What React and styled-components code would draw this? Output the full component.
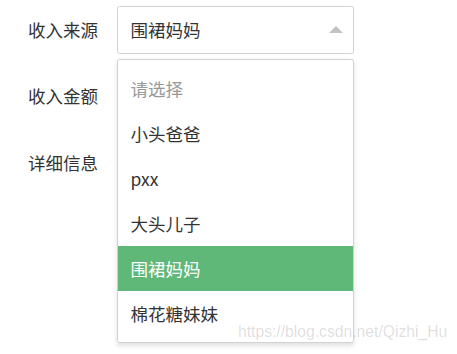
import React from "react";
import styled, { createGlobalStyle } from "styled-components";

const GlobalStyle = createGlobalStyle`
  html, body {
    margin: 0;
    padding: 0;
    background: #fff;
  }
  body {
    font-family: "Noto Sans CJK SC", "Noto Sans", sans-serif;
  }
`;

const Page = styled.div`
  position: relative;
  width: 457px;
  height: 354px;
  overflow: hidden;
  padding-top: 6px;
  box-sizing: border-box;
`;

const FormItem = styled.div`
  display: flex;
  align-items: flex-start;
  margin-bottom: 18.75px;
`;

const Label = styled.label`
  width: 89px;
  padding-left: 28px;
  height: 47.5px;
  line-height: 47.5px;
  font-size: 17.5px;
  color: #333;
`;

const SelectWrap = styled.div`
  position: relative;
  width: 237px;
`;

const Input = styled.div`
  box-sizing: border-box;
  height: ${(p) => p.h || 47.5}px;
  border: 1px solid ${(p) => (p.active ? "#d2d2d2" : "#e6e6e6")};
  border-radius: 2.5px;
  padding-left: 12.5px;
  line-height: 45.5px;
  font-size: 17.5px;
  color: #333;
  background: #fff;
`;

const Edge = styled.span`
  position: absolute;
  right: 11px;
  top: 20px;
  width: 0;
  height: 0;
  border-left: 7.5px solid transparent;
  border-right: 7.5px solid transparent;
  border-bottom: 7.5px solid #c2c2c2;
`;

const Menu = styled.dl`
  position: absolute;
  z-index: 10;
  left: 0;
  top: 52.5px;
  width: 100%;
  box-sizing: border-box;
  margin: 0;
  padding: 6.25px 0;
  background: #fff;
  border: 1px solid #d2d2d2;
  border-radius: 2.5px;
  box-shadow: 0 2.5px 5px rgba(0, 0, 0, 0.12);
`;

const Option = styled.dd`
  margin: 0;
  padding: 0 12.5px;
  line-height: 45px;
  height: 45px;
  font-size: 17.5px;
  white-space: nowrap;
  color: ${(p) => (p.selected ? "#fff" : p.tip ? "#999" : "#333")};
  background: ${(p) => (p.selected ? "#5fb878" : "transparent")};
`;

const Watermark = styled.div`
  position: absolute;
  z-index: 20;
  left: 238px;
  top: 323px;
  font-family: "Liberation Sans", Arial, sans-serif;
  font-size: 15.7px;
  line-height: 18px;
  color: rgba(0, 0, 0, 0.14);
  white-space: nowrap;
`;

const options = ["小头爸爸", "pxx", "大头儿子", "围裙妈妈", "棉花糖妹妹"];

export default function App() {
  const current = "围裙妈妈";
  return (
    <>
      <GlobalStyle />
      <Page>
        <FormItem>
          <Label>收入来源</Label>
          <SelectWrap>
            <Input active>{current}</Input>
            <Edge />
            <Menu>
              <Option tip>请选择</Option>
              {options.map((o) => (
                <Option key={o} selected={o === current}>
                  {o}
                </Option>
              ))}
            </Menu>
          </SelectWrap>
        </FormItem>
        <FormItem>
          <Label>收入金额</Label>
          <SelectWrap>
            <Input />
          </SelectWrap>
        </FormItem>
        <FormItem>
          <Label>详细信息</Label>
          <SelectWrap>
            <Input h={125} />
          </SelectWrap>
        </FormItem>
        <Watermark>https://blog.csdn.net/Qizhi_Hu</Watermark>
      </Page>
    </>
  );
}
